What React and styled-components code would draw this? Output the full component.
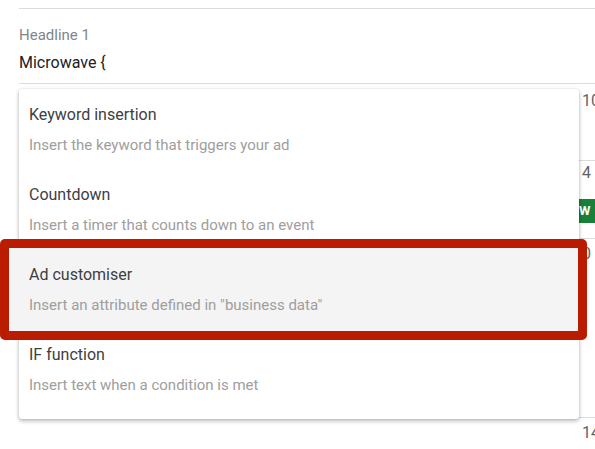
import styled, { createGlobalStyle } from "styled-components";

const GlobalStyle = createGlobalStyle`
    html, body {
        margin: 0;
        padding: 0;
        background: #fff;
        overflow: hidden;
    }
    body {
        font-family: Roboto, "Liberation Sans", Arial, sans-serif;
    }
`

const options = [
    { title: "Keyword insertion", text: "Insert the keyword that triggers your ad" },
    { title: "Countdown", text: "Insert a timer that counts down to an event" },
    { title: "Ad customiser", text: 'Insert an attribute defined in "business data"', active: true },
    { title: "IF function", text: "Insert text when a condition is met" },
]

const App = () => {
    return <Page>
        <GlobalStyle />
        <Field>
            <Label>Headline 1</Label>
            <Value>Microwave {"{"}</Value>
        </Field>
        <Row $height={77} $pad={7}>
            <Spacer />
            <Num>10</Num>
        </Row>
        <Row $height={78} $pad={2}>
            <Spacer />
            <NumCell>
                <Num>4</Num>
                <Badge>W</Badge>
            </NumCell>
        </Row>
        <Row $height={179} $pad={5}>
            <Spacer />
            <Num>0</Num>
        </Row>
        <Row $height={40} $pad={5} $last>
            <Spacer />
            <Num>14</Num>
        </Row>
        <Menu>
            {options.map((o) => (
                <Item key={o.title} $active={o.active}>
                    <ItemTitle>{o.title}</ItemTitle>
                    <ItemText>{o.text}</ItemText>
                </Item>
            ))}
        </Menu>
    </Page>
}

const Page = styled.div`
    position: relative;
    width: 595px;
    height: 449px;
    overflow: hidden;
    padding-top: 8px;
    box-sizing: border-box;
`
const Field = styled.div`
    margin-left: 19px;
    border-top: 1px solid #dcdcdc;
    border-bottom: 1px solid #dcdcdc;
    padding: 16px 0 8px;
`
const Label = styled.div`
    font-size: 15px;
    line-height: 20px;
    color: #80868b;
`
const Value = styled.div`
    margin-top: 6px;
    font-size: 16px;
    line-height: 24px;
    color: #202124;
`
const Row = styled.div`
    margin-left: 19px;
    height: ${(p) => p.$height}px;
    border-bottom: ${(p) => (p.$last ? "none" : "1px solid #dcdcdc")};
    display: grid;
    grid-template-columns: 563px 40px;
    padding-top: ${(p) => p.$pad}px;
    box-sizing: border-box;
`
const Spacer = styled.div``
const NumCell = styled.div`
    display: flex;
    flex-direction: column;
    align-items: flex-start;
`
const Num = styled.div`
    font-size: 16px;
    line-height: 20px;
    color: #5f6368;
`
const Badge = styled.div`
    margin-top: 16px;
    margin-left: -4px;
    width: 30px;
    height: 24px;
    background: #188038;
    color: #fff;
    font-weight: 700;
    font-size: 13px;
    line-height: 24px;
    padding-left: 1px;
`
const Menu = styled.div`
    position: absolute;
    top: 89px;
    left: 19px;
    width: 560px;
    height: 330px;
    background: #fff;
    border-radius: 3px;
    box-shadow: 0 2px 4px rgba(0, 0, 0, 0.28), 0 0 2px rgba(0, 0, 0, 0.12);
    z-index: 2;
`
const Item = styled.div`
    position: relative;
    height: 80px;
    padding: 16px 10px 0;
    box-sizing: border-box;
    isolation: isolate;
    &::before {
        content: "";
        display: ${(p) => (p.$active ? "block" : "none")};
        position: absolute;
        top: -10px;
        bottom: -11px;
        left: -19px;
        right: -8px;
        border: 9px solid #b91c00;
        border-radius: 5px;
        background: #f4f4f4;
        z-index: -1;
    }
`
const ItemTitle = styled.div`
    font-size: 16px;
    line-height: 20px;
    color: #3c4043;
`
const ItemText = styled.div`
    margin-top: 10px;
    font-size: 15px;
    line-height: 20px;
    color: #9e9e9e;
`

export default App;
